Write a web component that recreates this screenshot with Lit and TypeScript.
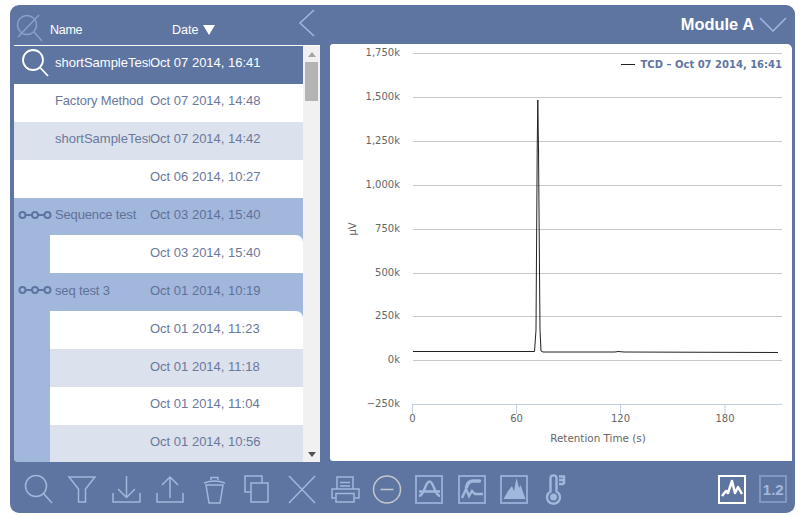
import { LitElement, html, css, svg } from 'lit';
import { customElement } from 'lit/decorators.js';

type Row = { name?: string; date: string; kind: string; icon?: string };

const rows: Row[] = [
  { name: 'shortSampleTest', date: 'Oct 07 2014, 16:41', kind: 'sel', icon: 'search' },
  { name: 'Factory Method', date: 'Oct 07 2014, 14:48', kind: 'plain' },
  { name: 'shortSampleTest', date: 'Oct 07 2014, 14:42', kind: 'alt' },
  { date: 'Oct 06 2014, 10:27', kind: 'plain' },
  { name: 'Sequence test', date: 'Oct 03 2014, 15:40', kind: 'seq', icon: 'chain' },
  { date: 'Oct 03 2014, 15:40', kind: 'child first' },
  { name: 'seq test 3', date: 'Oct 01 2014, 10:19', kind: 'seq', icon: 'chain' },
  { date: 'Oct 01 2014, 11:23', kind: 'child first' },
  { date: 'Oct 01 2014, 11:18', kind: 'child alt' },
  { date: 'Oct 01 2014, 11:04', kind: 'child' },
  { date: 'Oct 01 2014, 10:56', kind: 'child alt' },
];

const yTicks: [string, number][] = [
  ['1,750k', 53], ['1,500k', 97], ['1,250k', 141], ['1,000k', 185], ['750k', 229],
  ['500k', 273], ['250k', 316], ['0k', 360],
];
const xTicks: [string, number][] = [['0', 412.5], ['60', 516.5], ['120', 620.5], ['180', 725]];

const ic = (body: unknown) => html`<svg class="ic" viewBox="0 0 30 30">${body}</svg>`;

// first eight sit on a wider pitch than the chart buttons after them
const fileTools = [
  ic(svg`<circle cx="13" cy="12" r="10.500"/><path d="M20.500 19.500L29 29"/>`),
  ic(svg`<path d="M2 3H28L18.500 15V28H11.500V15Z"/>`),
  ic(svg`<path d="M2 19V28H29V19M15.500 2V23M7 15L15.500 23.500L24 15"/>`),
  ic(svg`<path d="M2 19V28H28V19M15 3V24M7 11L15 3L23 11"/>`),
  ic(svg`<path d="M5 9Q15.500 5 26 9M12 6V3.500H19V6M7 11L10 29H21L24 11Z"/>`),
  ic(svg`<path d="M8 18H2V2H19V9"/><rect x="8" y="9" width="17" height="19"/>`),
  ic(svg`<path d="M2 2L28 29M28 2L2 29"/>`),
  ic(svg`<path d="M6 15V3H22V15M9 8.500H19M9 12H19M4.500 24H1V15H28V24H23.500"/><rect x="5" y="19.500" width="18" height="8.500"/>`),
];
const chartTools = [
  html`<svg class="ic grey" viewBox="0 0 30 30"><circle cx="15" cy="15.500" r="13.500"/><path d="M8.500 15.500H21.500" stroke-width="2"/></svg>`,
  ic(svg`<rect class="box" x="2" y="2" width="26" height="27"/><path class="thick" d="M5 17.500H26M5 22C11 21 11 7.500 15.500 7.500C20 7.500 20 21 26 22"/>`),
  ic(svg`<rect class="box" x="2" y="2" width="26" height="27"/><path class="thick" d="M5 24L9 15L12 22L15 17L18 20H26"/><path class="blob" d="M9.500 13C10.500 9 13 7 16 7H22.500"/>`),
  ic(svg`<rect class="box" x="2" y="2" width="26" height="27"/><path class="solid" d="M4.500 25L9 17L13 12L15 17L17.500 4L20 14L21.500 11L24 18L26.500 25Z"/>`),
  ic(svg`<path class="thick" d="M8.500 17.500V4C8.500 0.500 14.500 0.500 14.500 4V17.500A6.500 6.500 0 1 1 8.500 17.500ZM17 2.500H22V10M17 6H22M17 10H22"/><circle class="solid" cx="11.500" cy="23" r="3.500"/>`),
];

@customElement('app-root')
export class AppRoot extends LitElement {
  static styles = css`
    :host {
      display: block;
      width: 805px;
      height: 517px;
      padding: 5px 10px 4px;
      box-sizing: border-box;
      background: #fff;
      font-family: 'Liberation Sans', Arial, sans-serif;
    }
    svg { display: block; }
    .frame {
      height: 508px;
      background: #5e75a1;
      border-radius: 9px;
      display: flex;
      flex-direction: column;
      overflow: hidden;
    }
    .main {
      height: 457px;
      display: flex;
      align-items: flex-start;
    }
    .left {
      width: 306px;
      margin-left: 4px;
      flex: none;
    }
    .head {
      height: 40px;
      display: flex;
      align-items: center;
      color: #fff;
      font-size: 12.500px;
      position: relative;
    }
    .logo { width: 30px; height: 30px; margin: 4px 0 0 0; flex: none; }
    .logo * { fill: none; stroke: #8ba0c8; stroke-width: 1.500; }
    .name-h { margin: 10px 0 0 6px; width: 122px; letter-spacing: -0.300px; }
    .date-h { margin-top: 10px; }
    .tri {
      display: inline-block;
      width: 0;
      height: 0;
      margin: 10px 0 0 5px;
      border-left: 6px solid transparent;
      border-right: 6px solid transparent;
      border-top: 10px solid #fff;
    }
    .back { position: absolute; left: 284px; top: 3px; }
    .back path, .down path { fill: none; stroke: #a2b7dc; stroke-width: 1.500; }
    .list {
      height: 417px;
      display: flex;
      border-top: 1px solid #fff;
      box-sizing: border-box;
      background: #a2b7dc;
      overflow: hidden;
      border-bottom-left-radius: 4px;
    }
    .rows { width: 289px; flex: none; height: 416px; overflow: hidden; background: #a2b7dc; }
    .row {
      height: 37.900px;
      box-sizing: border-box;
      padding-bottom: 4px;
      display: flex;
      align-items: center;
      font-size: 13px;
      color: #6a789c;
      background: #fff;
      white-space: nowrap;
    }
    .cell-ic { width: 41px; flex: none; display: flex; align-items: center; justify-content: center; }
    .cell-name { width: 95px; flex: none; overflow: hidden; letter-spacing: -0.150px; }
    .sel { background: #5e75a1; color: #fff; }
    .alt { background: #dbe1ed; }
    .sel .cell-name, .alt .cell-name { letter-spacing: 0; }
    .seq { background: #a2b7dc; color: #5f7199; }
    .child { margin-left: 36px; }
    .child .cell-ic { width: 5px; }
    .first { border-top-right-radius: 7px; }
    .sbar {
      width: 17px;
      flex: none;
      background: #f1f1f1;
      position: relative;
    }
    .thumb {
      position: absolute;
      left: 2px;
      top: 16px;
      width: 13px;
      height: 39px;
      background: #b4b4b4;
    }
    .arrow { position: absolute; left: 5px; width: 0; height: 0; border-left: 4px solid transparent; border-right: 4px solid transparent; }
    .up { top: 6px; border-bottom: 5px solid #a6a6a6; }
    .dn { bottom: 5px; border-top: 5px solid #505050; }
    .right { margin-left: 10px; flex: 1; min-width: 0; }
    .rhead {
      height: 39px;
      display: flex;
      align-items: center;
      justify-content: flex-end;
      color: #fff;
      font-weight: 700;
      font-size: 16.400px;
      padding-right: 8px;
      gap: 5px;
    }
    .down { margin-top: -2px; }
    .plot {
      width: 462px;
      height: 417px;
      background: #fff;
      border-radius: 3px 5px 0 3px;
      overflow: hidden;
    }
    .plot text { font-family: 'DejaVu Sans', sans-serif; font-size: 10px; fill: #666; }
    .plot .title { font-size: 10.400px; }
    .plot .legend { font-weight: 700; fill: #5e75a1; font-size: 10px; }
    .bar {
      flex: 1;
      display: flex;
      align-items: center;
      padding: 3px 0 0 6px;
    }
    .tool { width: 44px; flex: none; display: flex; justify-content: center; }
    .group { display: flex; }
    .group.charts { margin-left: -2.700px; }
    .group.charts .tool { width: 42.600px; }
    .tool.r { width: 41.500px; }
    .sp { flex: 1; }
    .ic { width: 30px; height: 30px; overflow: visible; }
    .ic * { fill: none; stroke: #a2b7dc; stroke-width: 1.500; }
    .ic.grey * { stroke: #c4c8cc; }
    .ic .box { stroke-width: 2; stroke: #94aad4; }
    .ic .thick { stroke-width: 2.400; }
    .ic .blob { stroke-width: 3.500; stroke-linecap: round; }
    .ic .solid { fill: #a2b7dc; stroke: none; }
    .on .box { stroke: #fff; }
    .on .zig { stroke: #fff; stroke-width: 2.500; stroke-linejoin: round; }
    .num {
      width: 28px;
      height: 28px;
      box-sizing: border-box;
      border: 2px solid #8197c0;
      display: flex;
      align-items: center;
      justify-content: center;
      color: #a2b7dc;
      font-weight: 700;
      font-size: 15px;
    }
    .r-spacer { width: 1px; flex: none; }
  `;

  rowIcon(icon?: string) {
    if (icon === 'search') {
      return html`<svg width="30" height="30" viewBox="0 0 30 30" fill="none" stroke="#fff" stroke-width="1.800">
        <circle cx="13" cy="12" r="10"/><path d="M20 19.500L28 28"/></svg>`;
    }
    if (icon === 'chain') {
      return html`<svg width="34" height="10" viewBox="0 0 34 10" fill="none" stroke="#5e75a1" stroke-width="2">
        <circle cx="4.500" cy="5" r="3"/><circle cx="17" cy="5" r="3"/><circle cx="29.500" cy="5" r="3"/>
        <path d="M7.500 5H14M20 5H26.500"/></svg>`;
    }
    return '';
  }

  renderChart() {
    return html`<svg width="462" height="417" viewBox="330 44 462 417">
      ${yTicks.map(([t, y]) => svg`
        <line x1="413" x2="782" y1=${y + 0.5} y2=${y + 0.5} stroke="#c8c8c8"/>
        <text x="400" y=${y + 3} text-anchor="end">${t}</text>`)}
      <text x="400" y="407" text-anchor="end">−250k</text>
      <line x1="412" x2="782" y1="404.500" y2="404.500" stroke="#c0d0e0"/>
      ${xTicks.map(([t, x]) => svg`
        <line x1=${x} x2=${x} y1="404" y2="414" stroke="#c0d0e0"/>
        <text x=${x} y="422" text-anchor="middle">${t}</text>`)}
      <text class="title" x="598" y="442" text-anchor="middle">Retention Time (s)</text>
      <text transform="translate(356 229) rotate(-90)" text-anchor="middle">µV</text>
      <polyline fill="none" stroke="#222" stroke-width="1"
        points="413,351.500 534.500,351.500 536,330 537.200,150 537.800,100 538.500,150 540,330 541,351 543,352 615,352 618,351.500 624,352 778,352.500"/>
      <line x1="621" x2="635" y1="64.500" y2="64.500" stroke="#222"/>
      <text class="legend" x="782" y="68" text-anchor="end">TCD – Oct 07 2014, 16:41</text>
    </svg>`;
  }

  render() {
    return html`<div class="frame">
      <div class="main">
        <div class="left">
          <div class="head">
            <svg class="logo" viewBox="0 0 30 30">
              <circle cx="13" cy="13" r="9.500"/><path d="M20 20L28 29M4 25L25 3"/>
            </svg>
            <span class="name-h">Name</span>
            <span class="date-h">Date</span><span class="tri"></span>
            <svg class="back" width="18" height="30" viewBox="0 0 18 30"><path d="M16 2L2 15L16 28"/></svg>
          </div>
          <div class="list">
            <div class="rows">
              ${rows.map(r => html`<div class="row ${r.kind}">
                <div class="cell-ic">${this.rowIcon(r.icon)}</div>
                <div class="cell-name">${r.name ?? ''}</div>
                <div>${r.date}</div>
              </div>`)}
            </div>
            <div class="sbar">
              <div class="arrow up"></div>
              <div class="thumb"></div>
              <div class="arrow dn"></div>
            </div>
          </div>
        </div>
        <div class="right">
          <div class="rhead">
            <span>Module A</span>
            <svg class="down" width="28" height="16" viewBox="0 0 28 16"><path d="M1 2L14 15L27 2"/></svg>
          </div>
          <div class="plot">${this.renderChart()}</div>
        </div>
      </div>
      <div class="bar">
        <div class="group">${fileTools.map(t => html`<div class="tool">${t}</div>`)}</div>
        <div class="group charts">${chartTools.map(t => html`<div class="tool">${t}</div>`)}</div>
        <div class="sp"></div>
        <div class="tool r on">
          <svg class="ic" viewBox="0 0 30 30">
            <rect class="box" x="2" y="2" width="26" height="27"/>
            <path class="zig" d="M5 22L9 17L11 19L15 7L18 19L21 13L25 20"/>
          </svg>
        </div>
        <div class="tool r"><div class="num">1.2</div></div>
        <div class="r-spacer"></div>
      </div>
    </div>`;
  }
}
